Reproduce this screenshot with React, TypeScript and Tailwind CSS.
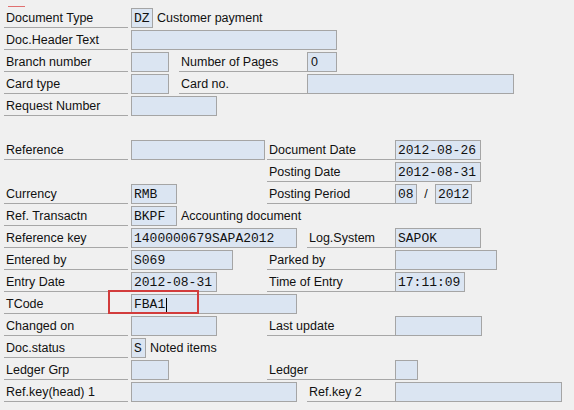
import React from "react";

const sans = "font-['Liberation_Sans',Arial,sans-serif]";
const mono = "font-['Liberation_Mono','Courier_New',monospace]";

type LabelProps = { text?: string; className?: string };

// grey underlined caption, SAP style
const Label: React.FC<LabelProps> = ({ text, className = "" }) => (
  <div
    className={`h-[20px] shrink-0 border-b border-[#a7a7a7] pl-[2px] text-[12.5px] leading-[21px] text-[#111] ${sans} ${className}`}
  >
    {text}
  </div>
);

type BoxProps = { value?: string; className?: string; isMono?: boolean; cursor?: boolean };

const Box: React.FC<BoxProps> = ({ value, className = "", isMono = true, cursor }) => (
  <div
    className={`flex h-[20px] shrink-0 items-center border border-[#a5a5a5] bg-[#dbe5f2] pl-[2px] pt-px text-[#111] ${
      isMono ? `${mono} text-[13px]` : `${sans} text-[12.5px]`
    } ${className}`}
  >
    {value}
    {cursor && <span className="ml-px inline-block h-[14px] w-px bg-black" />}
  </div>
);

const Text: React.FC<{ text: string; className?: string }> = ({ text, className = "" }) => (
  <div className={`h-[20px] shrink-0 text-[12.5px] leading-[21px] text-[#111] ${sans} ${className}`}>{text}</div>
);

const Row: React.FC<{ children?: React.ReactNode }> = ({ children }) => (
  <div className="flex h-[22px] items-start">{children}</div>
);

export default function App() {
  return (
    <div className="relative h-[410px] w-[574px] overflow-hidden bg-[#f0f0f0] pl-[4px] pt-[8px]">
      {/* leftover of a marker line at the very top */}
      <div className="absolute left-[8px] top-[6px] h-px w-[17px] bg-[#e07070]" />

      <Row>
        <Label text="Document Type" className="w-[124px]" />
        <Box value="DZ" className="ml-[3px] w-[22px]" />
        <Text text="Customer payment" className="ml-[4px]" />
      </Row>
      <Row>
        <Label text="Doc.Header Text" className="w-[124px]" />
        <Box className="ml-[3px] w-[206px]" />
      </Row>
      <Row>
        <Label text="Branch number" className="w-[124px]" />
        <Box className="ml-[3px] w-[38px]" />
        <Label text="Number of Pages" className="ml-[10px] w-[128px]" />
        <Box value="0" isMono={false} className="w-[30px] pl-[3px]" />
      </Row>
      <Row>
        <Label text="Card type" className="w-[124px]" />
        <Box className="ml-[3px] w-[38px]" />
        <Label text="Card no." className="ml-[10px] w-[128px]" />
        <Box className="w-[207px]" />
      </Row>
      <Row>
        <Label text="Request Number" className="w-[124px]" />
        <Box className="ml-[3px] w-[86px]" />
      </Row>
      <Row />
      <Row>
        <Label text="Reference" className="w-[124px]" />
        <Box className="ml-[3px] w-[134px]" />
        <Label text="Document Date" className="ml-[2px] w-[128px]" />
        <Box value="2012-08-26" className="w-[86px]" />
      </Row>
      <Row>
        <Label text="Posting Date" className="ml-[263px] w-[128px]" />
        <Box value="2012-08-31" className="w-[86px]" />
      </Row>
      <Row>
        <Label text="Currency" className="w-[124px]" />
        <Box value="RMB" className="ml-[3px] w-[46px]" />
        <Label text="Posting Period" className="ml-[90px] w-[128px]" />
        <Box value="08" className="w-[22px]" />
        <Text text="/" className="w-[18px] text-center" />
        <Box value="2012" className="w-[37px]" />
      </Row>
      <Row>
        <Label text="Ref. Transactn" className="w-[124px]" />
        <Box value="BKPF" className="ml-[3px] w-[46px]" />
        <Text text="Accounting document" className="ml-[4px]" />
      </Row>
      <Row>
        <Label text="Reference key" className="w-[124px]" />
        <Box value="1400000679SAPA2012" className="ml-[3px] w-[166px]" />
        <Label text="Log.System" className="ml-[10px] w-[88px]" />
        <Box value="SAPOK" className="w-[86px]" />
      </Row>
      <Row>
        <Label text="Entered by" className="w-[124px]" />
        <Box value="S069" className="ml-[3px] w-[102px]" />
        <Label text="Parked by" className="ml-[34px] w-[128px]" />
        <Box className="w-[102px]" />
      </Row>
      <Row>
        <Label text="Entry Date" className="w-[124px]" />
        <Box value="2012-08-31" className="ml-[3px] w-[86px]" />
        <Label text="Time of Entry" className="ml-[50px] w-[128px]" />
        <Box value="17:11:09" className="w-[70px]" />
      </Row>
      <Row>
        <Label text="TCode" className="w-[124px]" />
        <Box value="FBA1" cursor className="ml-[3px] w-[166px]" />
      </Row>
      <Row>
        <Label text="Changed on" className="w-[124px]" />
        <Box className="ml-[3px] w-[86px]" />
        <Label text="Last update" className="ml-[50px] w-[128px]" />
        <Box className="w-[87px]" />
      </Row>
      <Row>
        <Label text="Doc.status" className="w-[124px]" />
        <Box value="S" className="ml-[3px] w-[15px]" />
        <Text text="Noted items" className="ml-[4px]" />
      </Row>
      <Row>
        <Label text="Ledger Grp" className="w-[124px]" />
        <Box className="ml-[3px] w-[38px]" />
        <Label text="Ledger" className="ml-[98px] w-[128px]" />
        <Box className="w-[23px]" />
      </Row>
      <Row>
        <Label text="Ref.key(head) 1" className="w-[124px]" />
        <Box className="ml-[3px] w-[166px]" />
        <Label text="Ref.key 2" className="ml-[10px] w-[88px]" />
        <Box className="w-[167px]" />
      </Row>

      {/* red highlight drawn over the TCode field */}
      <div className="absolute left-[108px] top-[290px] h-[24px] w-[91px] border-2 border-[#d23c3c]" />
    </div>
  );
}
